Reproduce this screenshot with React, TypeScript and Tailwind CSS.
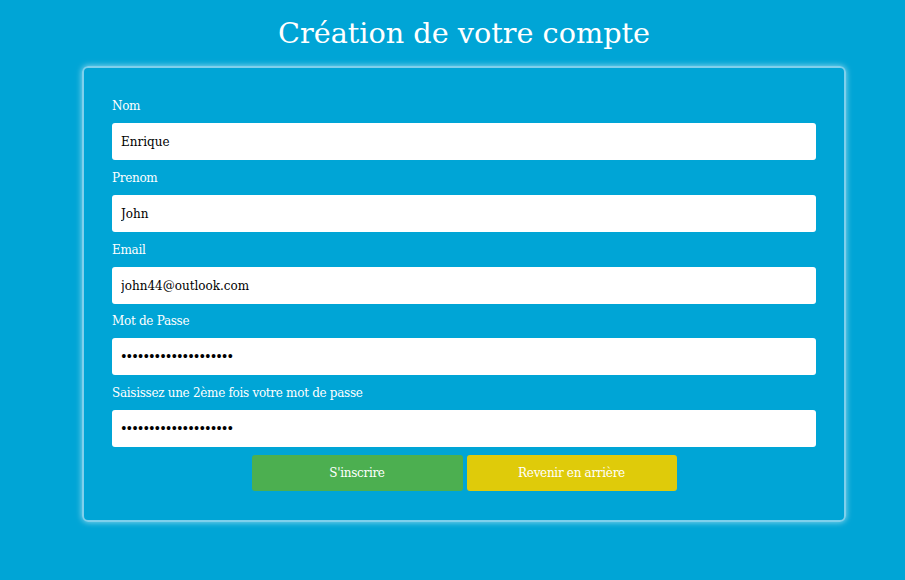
import React from "react";

const fields = [
  { label: "Nom", value: "Enrique", type: "text", mt: "" },
  { label: "Prenom", value: "John", type: "text", mt: "mt-[7px]" },
  { label: "Email", value: "john44@outlook.com", type: "text", mt: "mt-[7px]" },
  { label: "Mot de Passe", value: "12345678901234567890", type: "password", mt: "mt-[6px]" },
  { label: "Saisissez une 2ème fois votre mot de passe", value: "12345678901234567890", type: "password", mt: "mt-[7px]" },
];

const serif = '"DejaVu Serif", "Liberation Serif", serif';

export default function App() {
  return (
    <div className="min-h-[580px] w-full bg-[#00a5d6] text-white" style={{ fontFamily: serif }}>
      <div className="ml-[82px] w-[764px]">
        <h1 className="pt-[12px] text-center text-[28.7px] leading-[42px] text-white">Création de votre compte</h1>
        <div className="mt-[12px] rounded-[6px] border-2 border-[#7fd0ec] px-[28px] pt-[27px] pb-[29px] shadow-[0_0_6px_rgba(255,255,255,0.6)]">
          {fields.map((f, i) => (
            <div key={i} className={f.mt}>
              <div className="mb-[8px] h-[20px] pt-[2px] text-[12px] leading-[18px] tracking-[-0.3px]">{f.label}</div>
              <input
                readOnly
                type={f.type}
                value={f.value}
                className={
                  f.type === "password"
                    ? "block h-[37px] w-full rounded-[3px] bg-white px-[9px] text-[16px] text-black outline-none"
                    : "block h-[37px] w-full rounded-[3px] bg-white px-[9px] text-[12px] text-black outline-none"
                }
                style={{ fontFamily: f.type === "password" ? '"Liberation Serif", serif' : serif }}
              />
            </div>
          ))}
          <div className="mt-[8px] flex justify-center gap-[4px]">
            <button className="h-[36px] w-[211px] rounded-[3px] bg-[#4caf50] text-[12px] tracking-[-0.3px] text-white">S'inscrire</button>
            <button className="h-[36px] w-[210px] rounded-[3px] bg-[#dfcb0a] text-[12px] tracking-[-0.3px] text-white">Revenir en arrière</button>
          </div>
        </div>
      </div>
    </div>
  );
}
